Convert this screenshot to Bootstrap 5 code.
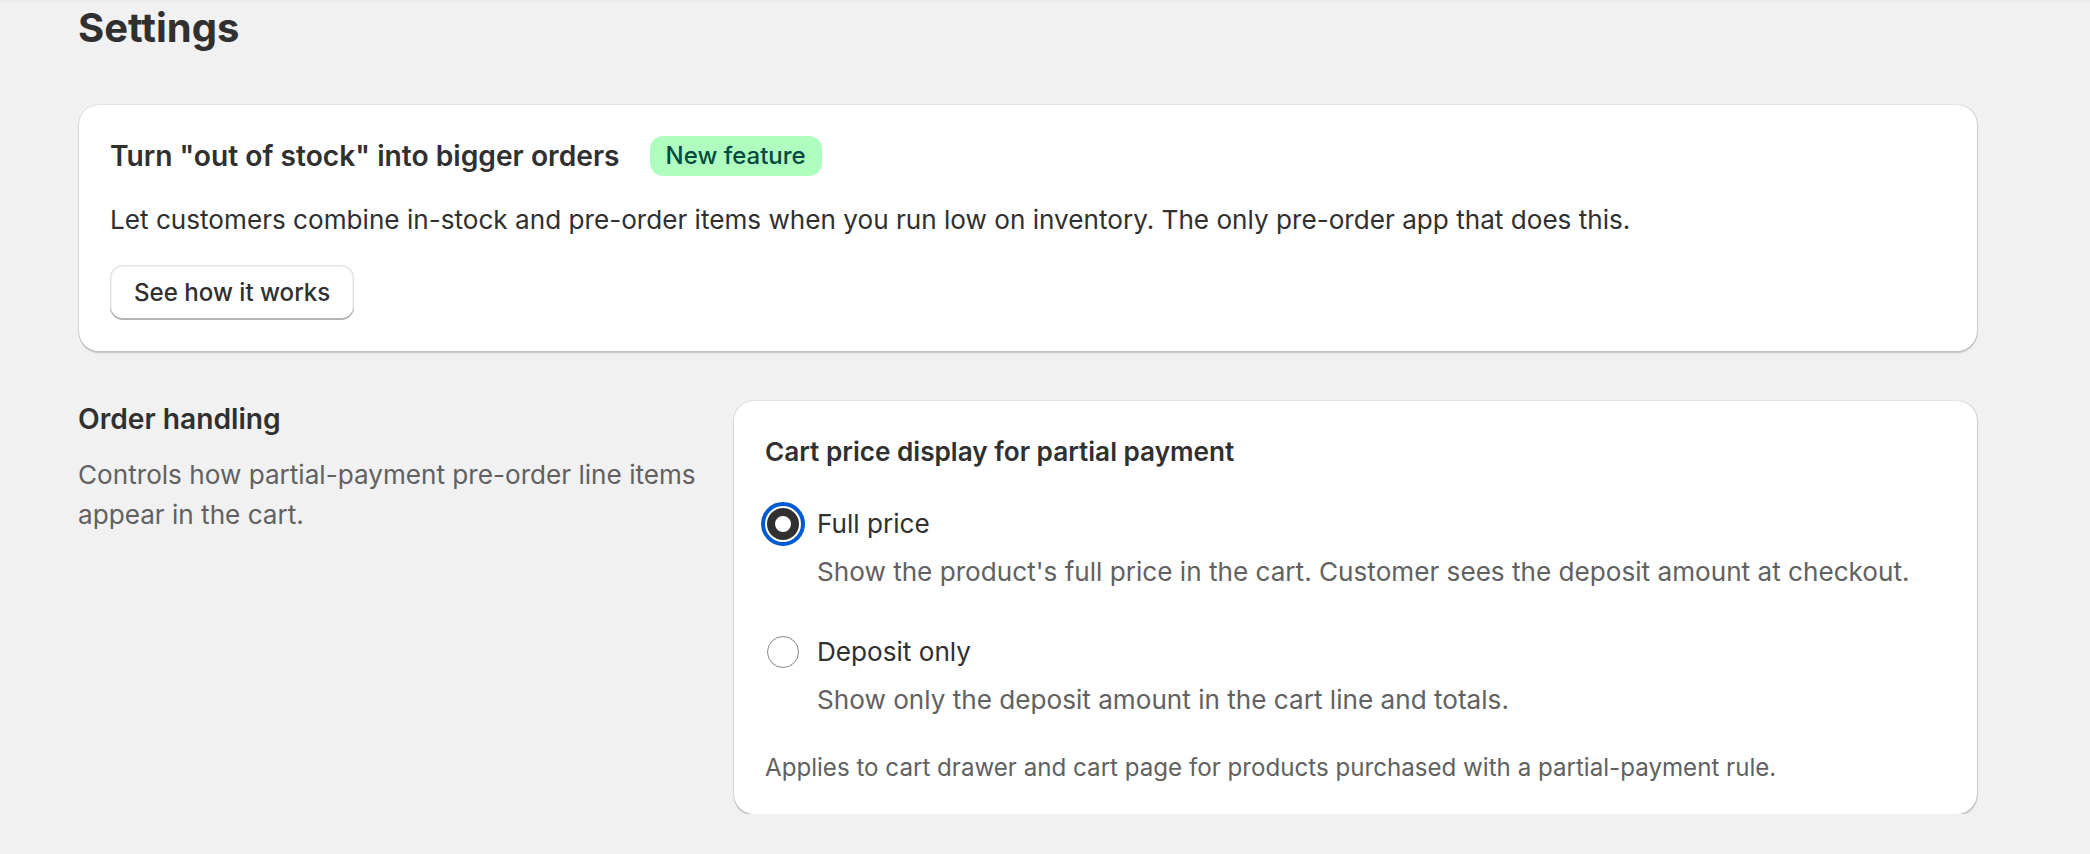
<!DOCTYPE html>
<html lang="en">

<head>
    <meta charset="UTF-8">
    <meta name="viewport" content="width=device-width, initial-scale=1.0">
    <title>Settings</title>
    <link href="https://cdn.jsdelivr.net/npm/bootstrap@5.3.0/dist/css/bootstrap.min.css" rel="stylesheet">
    <style>
        body {
            font-family: Inter, "Liberation Sans", sans-serif;
            background-color: #f1f1f1;
            color: #303030;
            font-size: 26px;
            line-height: 40px;
            overflow: hidden;
        }

        .page-wrap {
            padding: 0 113px 0 79px;
            border-top: 2px solid #ececec;
        }

        .page-title {
            font-size: 40px;
            font-weight: 700;
            line-height: 48px;
            margin: 2px 0 53px -1px;
        }

        .panel {
            background: #fff;
            border-radius: 20px;
            padding: 31px;
            box-shadow: 0 0 0 1px rgba(0, 0, 0, .05), 1px 0 0 rgba(0, 0, 0, .1), -1px 0 0 rgba(0, 0, 0, .05), 0 2px 0 rgba(0, 0, 0, .12), 0 3px 2px rgba(0, 0, 0, .04);
        }

        .panel-top {
            margin-bottom: 50px;
        }

        .panel-side {
            padding-bottom: 30px;
        }

        .panel-heading {
            font-size: 28.2px;
            font-weight: 600;
            line-height: 40px;
            margin: 0;
        }

        .panel-heading-sm {
            font-size: 26.15px;
            font-weight: 600;
            line-height: 40px;
            margin-bottom: 32px;
        }

        .new-tag {
            background: #affebf;
            color: #014b40;
            font-size: 24px;
            font-weight: 500;
            line-height: 40px;
            padding: 0 16px;
            border-radius: 13px;
        }

        .title-row {
            gap: 30px;
            margin-bottom: 24px;
        }

        .body-line {
            font-size: 26.13px;
            line-height: 40px;
        }

        .intro-line {
            margin-bottom: 25px;
        }

        .how-btn {
            font-size: 24.1px;
            font-weight: 550;
            color: #303030;
            background: #fff;
            line-height: 35px;
            padding: 10px 24px;
            border: 0;
            border-radius: 13px;
            box-shadow: inset 0 -2px 0 #b5b5b5, inset 0 0 0 1.5px #e3e3e3;
        }

        .side-col {
            width: 656px;
            flex: none;
            margin-left: -1px;
        }

        .side-title {
            font-size: 28.2px;
            font-weight: 600;
            line-height: 36px;
            margin-bottom: 18px;
        }

        .muted-line {
            color: #616161;
        }

        .radio-row {
            gap: 18px;
            margin-bottom: 8px;
        }

        .radio-dot {
            width: 32px;
            height: 32px;
            margin-left: 2px;
            border-radius: 50%;
            border: 1.5px solid #8a8a8a;
            background: #fff;
            flex: none;
        }

        .radio-dot.is-on {
            border: 8px solid #303030;
            outline: 4px solid #005bd3;
            outline-offset: 2px;
        }

        .radio-desc {
            padding-left: 52px;
        }

        .desc-gap {
            margin-bottom: 40px;
        }

        .desc-last {
            margin-bottom: 32px;
        }

        .foot-note {
            font-size: 24.13px;
            line-height: 32px;
        }
    </style>
</head>

<body>
    <div class="page-wrap">
        <h1 class="page-title">Settings</h1>

        <div class="panel panel-top">
            <div class="d-flex align-items-center title-row">
                <h2 class="panel-heading">Turn "out of stock" into bigger orders</h2>
                <span class="new-tag">New feature</span>
            </div>
            <p class="body-line intro-line">Let customers combine in-stock and pre-order items when you run low on inventory. The only pre-order app that does this.</p>
            <button type="button" class="how-btn">See how it works</button>
        </div>

        <div class="d-flex">
            <div class="side-col">
                <div class="side-title">Order handling</div>
                <div class="body-line muted-line">Controls how partial-payment pre-order line items<br>appear in the cart.</div>
            </div>
            <div class="panel panel-side flex-grow-1">
                <div class="panel-heading-sm">Cart price display for partial payment</div>
                <div class="d-flex align-items-center radio-row body-line">
                    <span class="radio-dot is-on"></span>
                    <span>Full price</span>
                </div>
                <div class="radio-desc body-line muted-line desc-gap">Show the product's full price in the cart. Customer sees the deposit amount at checkout.</div>
                <div class="d-flex align-items-center radio-row body-line">
                    <span class="radio-dot"></span>
                    <span>Deposit only</span>
                </div>
                <div class="radio-desc body-line muted-line desc-last">Show only the deposit amount in the cart line and totals.</div>
                <div class="foot-note muted-line">Applies to cart drawer and cart page for products purchased with a partial-payment rule.</div>
            </div>
        </div>
    </div>

    <script src="https://cdn.jsdelivr.net/npm/bootstrap@5.3.0/dist/js/bootstrap.bundle.min.js"></script>
</body>

</html>
